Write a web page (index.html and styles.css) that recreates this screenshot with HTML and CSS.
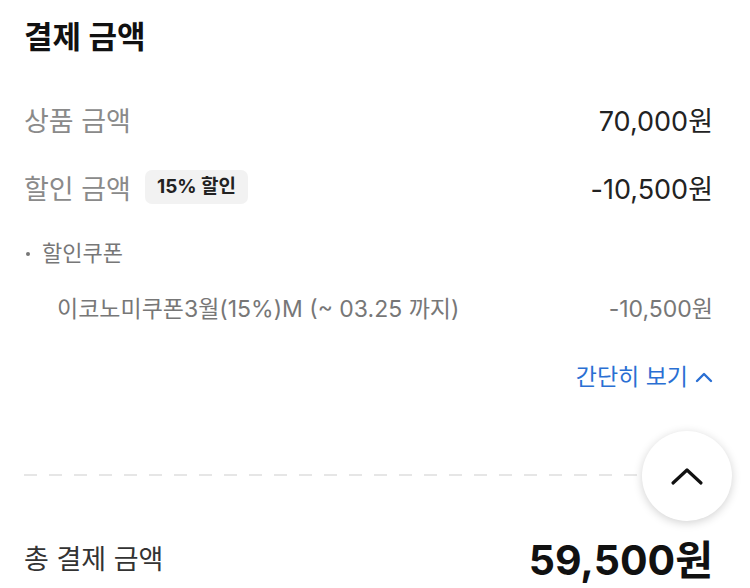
FILE: index.html
```html
<!DOCTYPE html>
<html lang="ko">
<head>
  <meta charset="UTF-8" />
  <meta name="viewport" content="width=device-width, initial-scale=1.0" />
  <title>결제 금액</title>
  <link rel="stylesheet" href="styles.css">
</head>
<body>
  <section class="payment">
    <h1 class="title">결제 금액</h1>

    <div class="row">
      <span class="label">상품 금액</span>
      <span class="value">70,000원</span>
    </div>

    <div class="row">
      <span class="label">할인 금액 <span class="badge">15% 할인</span></span>
      <span class="value">-10,500원</span>
    </div>

    <div class="sub-title"><span class="dot"></span>할인쿠폰</div>
    <div class="row coupon">
      <span>이코노미쿠폰3월(15%)M (~ 03.25 까지)</span>
      <span>-10,500원</span>
    </div>

    <div class="toggle-row">
      <a class="toggle" href="#">간단히 보기
        <svg width="18" height="12" viewBox="0 0 18 12"><path d="M2 10 L9 3 L16 10" fill="none" stroke="#2a6fd3" stroke-width="2.4" stroke-linecap="round" stroke-linejoin="round"/></svg>
      </a>
    </div>

    <div class="divider-wrap">
      <div class="divider"></div>
      <button class="top-btn" aria-label="맨 위로">
        <svg width="34" height="22" viewBox="0 0 34 22"><path d="M3 18 L17 5 L31 18" fill="none" stroke="#111" stroke-width="3.2" stroke-linecap="round" stroke-linejoin="round"/></svg>
      </button>
    </div>

    <div class="row total">
      <span class="label">총 결제 금액</span>
      <span class="value">59,500원</span>
    </div>
  </section>
</body>
</html>
```

FILE: styles.css
```css
body {
  margin: 0;
  background: #fff;
  font-family: "Inter", "Noto Sans CJK KR", sans-serif;
  color: #222;
}
.payment {
  padding: 13px 37px 0 24px;
}
.title {
  margin: 0 0 40px;
  font-size: 31px;
  font-weight: 700;
  line-height: 48px;
  color: #111;
}
.row {
  display: flex;
  justify-content: space-between;
  align-items: center;
  height: 36px;
  margin-bottom: 32px;
}
.label {
  display: flex;
  align-items: center;
  font-size: 27px;
  color: #8a8a8a;
}
.value {
  font-size: 27px;
  color: #222;
}
.badge {
  margin-left: 14px;
  padding: 0 12px;
  height: 34px;
  line-height: 34px;
  border-radius: 7px;
  background: #f2f2f2;
  font-size: 19px;
  font-weight: 700;
  color: #222;
}
.sub-title {
  display: flex;
  align-items: center;
  margin: 3px 0 20px 2px;
  font-size: 22px;
  color: #777;
  line-height: 32px;
}
.dot {
  width: 4px;
  height: 4px;
  border-radius: 50%;
  background: #777;
  margin: 2px 12px 0 0;
}
.coupon {
  padding-left: 33px;
  font-size: 23px;
  color: #777;
  margin-bottom: 36px;
}
.toggle-row {
  display: flex;
  justify-content: flex-end;
}
.toggle {
  display: flex;
  align-items: center;
  gap: 7px;
  font-size: 23px;
  color: #2a6fd3;
  text-decoration: none;
  line-height: 32px;
}
.divider-wrap {
  position: relative;
  height: 100px;
  margin-top: 32px;
  display: flex;
  align-items: center;
}
.divider {
  width: 620px;
  height: 2px;
  background: repeating-linear-gradient(90deg, #e6e6e6 0 13px, transparent 13px 25px);
}
.top-btn {
  position: absolute;
  right: -19px;
  top: 6px;
  width: 90px;
  height: 90px;
  border: none;
  border-radius: 50%;
  background: #fff;
  box-shadow: 0 2px 10px rgba(0, 0, 0, 0.18);
  display: flex;
  align-items: center;
  justify-content: center;
}
.total {
  margin-top: 14px;
}
.total .label {
  color: #333;
}
.total .value {
  font-size: 41px;
  font-weight: 700;
  color: #111;
}
```
